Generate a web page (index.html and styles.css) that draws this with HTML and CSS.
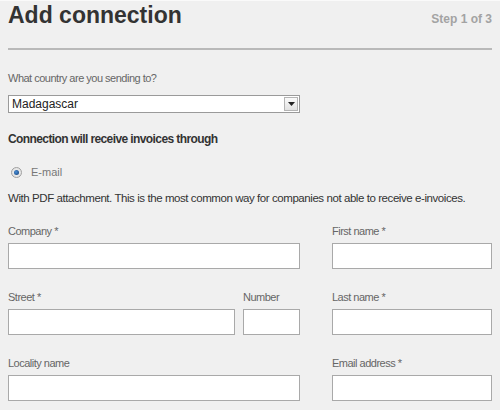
FILE: index.html
```html
<!DOCTYPE html>
<html>
<head>
<meta charset="utf-8">
<link rel="stylesheet" href="styles.css">
</head>
<body>
<div class="page">
  <div class="header">
    <h1 class="title">Add connection</h1>
    <span class="step">Step 1 of 3</span>
  </div>
  <div class="label country-label">What country are you sending to?</div>
  <div class="select">
    <span class="select-value">Madagascar</span>
    <span class="select-btn"><svg width="7" height="4" viewBox="0 0 7 4"><path d="M0 0H7L3.5 4Z" fill="#222"/></svg></span>
  </div>
  <div class="section-title">Connection will receive invoices through</div>
  <div class="radio-row">
    <span class="radio"><span class="radio-dot"></span></span>
    <span class="radio-label">E-mail</span>
  </div>
  <div class="note">With PDF attachment. This is the most common way for companies not able to receive e-invoices.</div>
  <div class="form">
    <div class="row">
      <div class="left">
        <div class="field grow">
          <div class="label">Company *</div>
          <div class="input"></div>
        </div>
      </div>
      <div class="right field">
        <div class="label">First name *</div>
        <div class="input"></div>
      </div>
    </div>
    <div class="row">
      <div class="left">
        <div class="field grow">
          <div class="label">Street *</div>
          <div class="input"></div>
        </div>
        <div class="field number">
          <div class="label">Number</div>
          <div class="input"></div>
        </div>
      </div>
      <div class="right field">
        <div class="label">Last name *</div>
        <div class="input"></div>
      </div>
    </div>
    <div class="row">
      <div class="left">
        <div class="field grow">
          <div class="label">Locality name</div>
          <div class="input"></div>
        </div>
      </div>
      <div class="right field">
        <div class="label">Email address *</div>
        <div class="input"></div>
      </div>
    </div>
  </div>
</div>
</body>
</html>
```
FILE: styles.css
```css
html, body {
  margin: 0;
  padding: 0;
}
body {
  background: #f0f0f0;
  font-family: "Liberation Sans", Arial, sans-serif;
  color: #333;
  border-top: 1px solid #fafafa;
  height: 409px;
  overflow: hidden;
}
.page {
  padding: 0 8px;
  width: 484px;
}
.header {
  height: 47px;
  border-bottom: 2px solid #b9b9b9;
  display: flex;
  justify-content: space-between;
  align-items: baseline;
}
.title {
  margin: 0;
  font-size: 23px;
  line-height: 29px;
  font-weight: bold;
  color: #333;
}
.step {
  font-size: 12px;
  font-weight: bold;
  color: #a3a3a3;
}
.label {
  font-size: 11px;
  line-height: 14px;
  color: #666;
  letter-spacing: -0.5px;
}
.country-label {
  margin-top: 21px;
}
.select {
  margin-top: 10px;
  width: 290px;
  height: 16px;
  border: 1px solid #9a9a9a;
  background: #fff;
  display: flex;
  align-items: center;
}
.select-value {
  flex: 1;
  font-size: 12px;
  padding-left: 3px;
  color: #222;
}
.select-btn {
  width: 12px;
  height: 12px;
  margin-right: 1px;
  border: 1px solid #b4b4b4;
  background: linear-gradient(#fafafa, #e2e2e2);
  display: flex;
  align-items: center;
  justify-content: center;
}
.section-title {
  margin-top: 19px;
  font-size: 12px;
  line-height: 14px;
  font-weight: bold;
  color: #333;
  letter-spacing: -0.6px;
}
.radio-row {
  margin-top: 19px;
  display: flex;
  align-items: center;
  height: 14px;
}
.radio {
  width: 9px;
  height: 9px;
  margin-left: 3px;
  border: 1px solid #a0a0a0;
  border-radius: 50%;
  background: radial-gradient(#f4f4f4, #dcdcdc);
  display: flex;
  align-items: center;
  justify-content: center;
}
.radio-dot {
  width: 5px;
  height: 5px;
  border-radius: 50%;
  background: radial-gradient(circle at 40% 40%, #4a90d8, #123c74);
}
.radio-label {
  margin-left: 9px;
  font-size: 11px;
  color: #777;
}
.note {
  margin-top: 12px;
  font-size: 11.5px;
  line-height: 14px;
  color: #333;
  letter-spacing: -0.43px;
}
.form {
  margin-top: 19px;
}
.row {
  display: flex;
  gap: 32px;
  margin-bottom: 21px;
}
.left {
  width: 292px;
  display: flex;
  gap: 8px;
}
.right {
  width: 160px;
}
.field .label {
  margin-bottom: 5px;
}
.grow {
  flex: 1;
}
.number {
  width: 57px;
}
.input {
  height: 24px;
  border: 1px solid #a9a9a9;
  background: #fff;
}
```
